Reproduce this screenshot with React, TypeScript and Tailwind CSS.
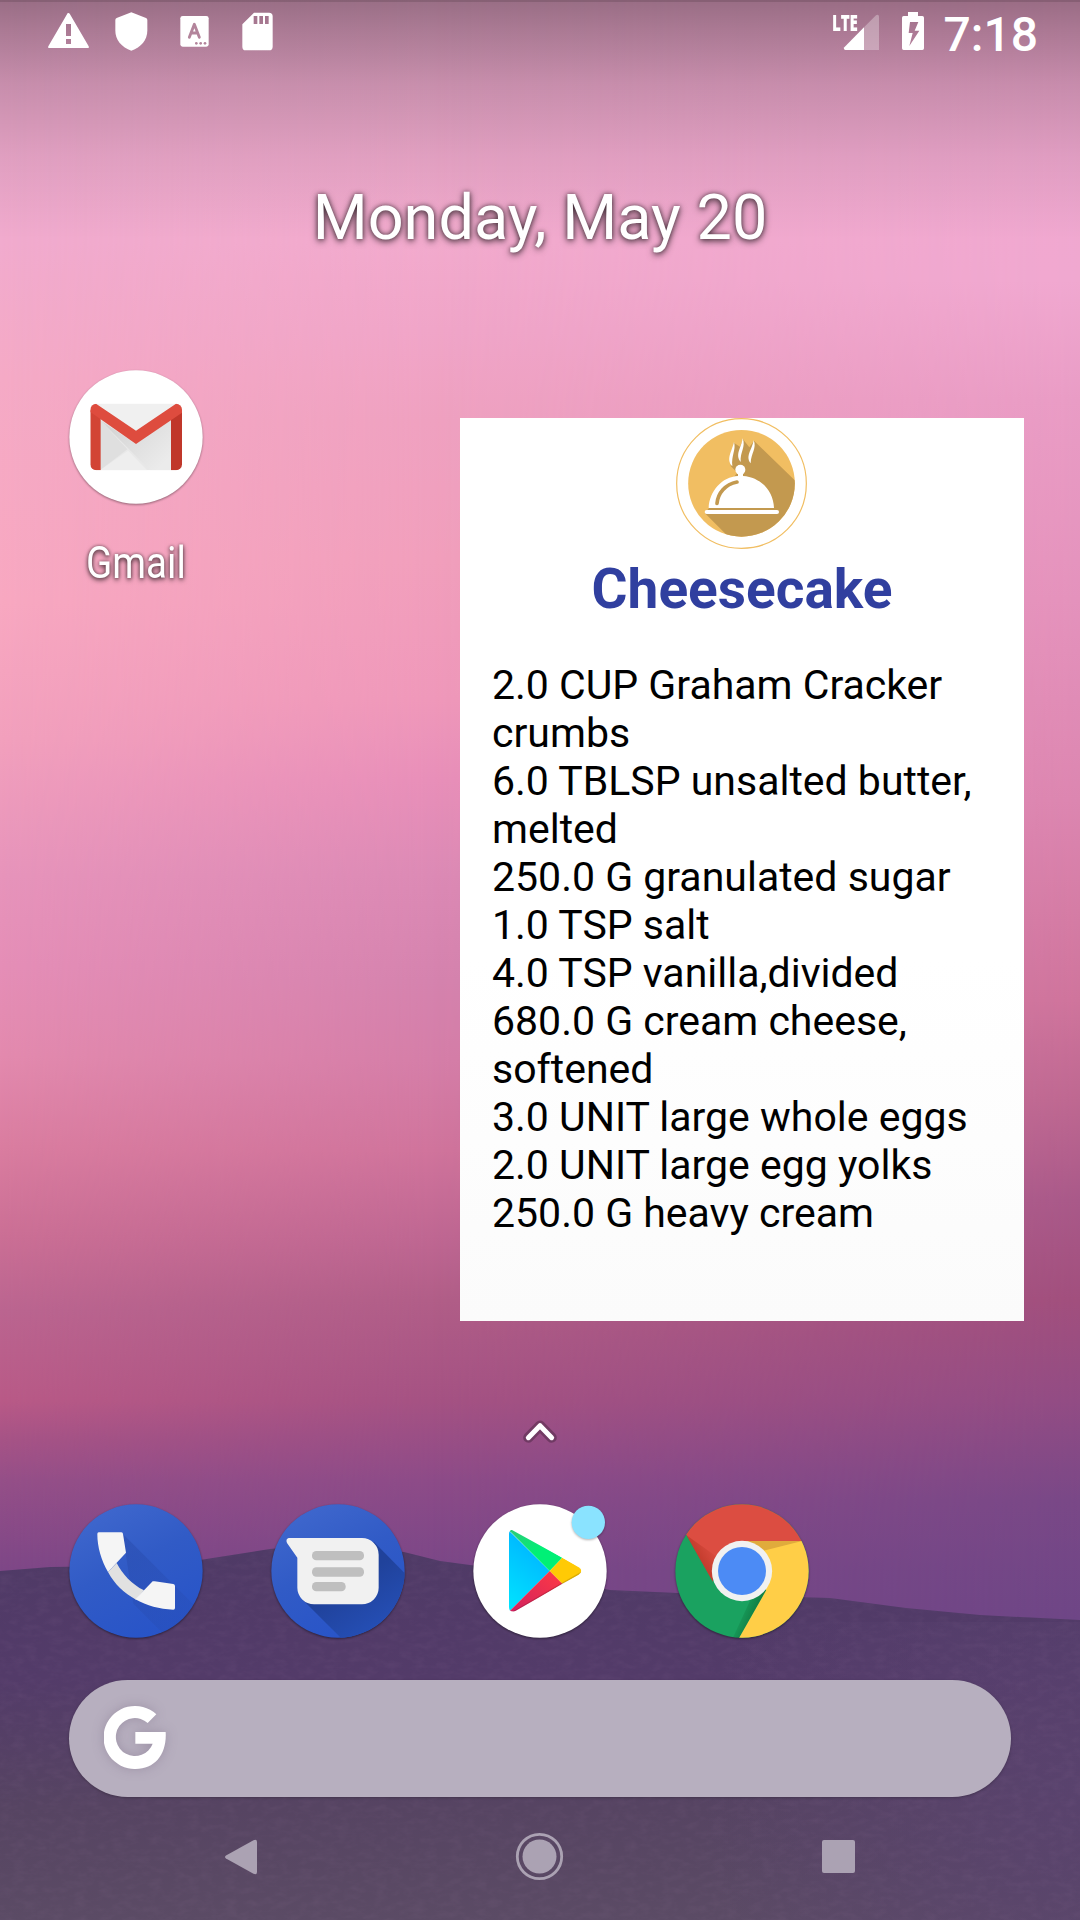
import React from "react";

const ingredients = [
  "2.0 CUP Graham Cracker",
  "crumbs",
  "6.0 TBLSP unsalted butter,",
  "melted",
  "250.0 G granulated sugar",
  "1.0 TSP salt",
  "4.0 TSP vanilla,divided",
  "680.0 G cream cheese,",
  "softened",
  "3.0 UNIT large whole eggs",
  "2.0 UNIT large egg yolks",
  "250.0 G heavy cream",
];

type Stop = [number, string];

const leftSky: Stop[] = [
  [0, "#efabd0"], [241, "#f1abce"], [377, "#f5aac6"], [603, "#f8a8c1"], [739, "#f2a0bd"],
  [875, "#e794bb"], [966, "#e58eb7"], [1056, "#e38aae"], [1147, "#da7da0"], [1237, "#cb6f95"],
  [1310, "#bb6590"], [1400, "#b95a87"], [1440, "#a65386"], [1480, "#954f88"], [1570, "#7e4787"],
];
const midSky: Stop[] = [
  [0, "#efacd0"], [241, "#f2aacd"], [330, "#f0a5c8"], [420, "#efa1c0"], [560, "#f19fbc"],
  [700, "#ef98ba"], [780, "#e88fb9"], [875, "#dc8ab5"], [980, "#d583ae"], [1060, "#d57ea8"],
  [1150, "#d0749c"], [1237, "#bf6792"], [1300, "#b15e88"], [1400, "#a55283"], [1480, "#8d4b88"],
  [1570, "#7a4787"],
];
const rightSky: Stop[] = [
  [0, "#efa8ce"], [280, "#f0a8d0"], [400, "#e99cc5"], [600, "#e492bc"], [800, "#dc86b0"],
  [1000, "#cf749c"], [1100, "#be6891"], [1200, "#a95989"], [1300, "#a14f7d"], [1400, "#924c84"],
  [1500, "#794887"], [1620, "#6e4686"],
];

const ridge =
  "M0 1571 L50 1567 L120 1566 L200 1560 L270 1549 L310 1545 L360 1547 L404 1552 L440 1561 L500 1569 L610 1590 L700 1594 L830 1598 L906 1608 L980 1615 L1080 1620 V1920 H0Z";

function Stops({ items }: { items: Stop[] }) {
  return (
    <>
      {items.map(([y, c]) => (
        <stop key={y} offset={y / 1920} stopColor={c} />
      ))}
    </>
  );
}

function Wallpaper() {
  return (
    <svg className="absolute inset-0" width="1080" height="1920" viewBox="0 0 1080 1920">
      <defs>
        <linearGradient id="skyL" x1="0" y1="0" x2="0" y2="1"><Stops items={leftSky} /></linearGradient>
        <linearGradient id="skyM" x1="0" y1="0" x2="0" y2="1"><Stops items={midSky} /></linearGradient>
        <linearGradient id="skyR" x1="0" y1="0" x2="0" y2="1"><Stops items={rightSky} /></linearGradient>
        <linearGradient id="fadeLeft" x1="0" y1="0" x2="1" y2="0">
          <stop offset="0" stopColor="#000" />
          <stop offset="0.4" stopColor="#fff" />
        </linearGradient>
        <linearGradient id="fadeRight" x1="0" y1="0" x2="1" y2="0">
          <stop offset="0.4" stopColor="#000" />
          <stop offset="1" stopColor="#fff" />
        </linearGradient>
        <mask id="maskM"><rect width="1080" height="1920" fill="url(#fadeLeft)" /></mask>
        <mask id="maskR"><rect width="1080" height="1920" fill="url(#fadeRight)" /></mask>
        <linearGradient id="hill" x1="0" y1="1545" x2="0" y2="1920" gradientUnits="userSpaceOnUse">
          <stop offset="0" stopColor="#4f3a66" />
          <stop offset="0.35" stopColor="#533b69" />
          <stop offset="0.7" stopColor="#564462" />
          <stop offset="1" stopColor="#5b4b65" />
        </linearGradient>
        <radialGradient id="hillGlow" cx="1080" cy="1790" r="380" gradientUnits="userSpaceOnUse">
          <stop offset="0" stopColor="#5a4270" stopOpacity="0.8" />
          <stop offset="1" stopColor="#5a4270" stopOpacity="0" />
        </radialGradient>
        <linearGradient id="scrim" x1="0" y1="0" x2="0" y2="1">
          <stop offset="0" stopColor="#000" stopOpacity="0.36" />
          <stop offset="0.12" stopColor="#000" stopOpacity="0.29" />
          <stop offset="0.35" stopColor="#000" stopOpacity="0.17" />
          <stop offset="0.65" stopColor="#000" stopOpacity="0.07" />
          <stop offset="1" stopColor="#000" stopOpacity="0" />
        </linearGradient>
        <filter id="grain" x="0" y="0" width="1" height="1">
          <feTurbulence type="fractalNoise" baseFrequency="0.08 0.16" numOctaves="3" seed="4" />
          <feColorMatrix values="0 0 0 0 0.5  0 0 0 0 0.3  0 0 0 0 0.5  0.9 0 0 0 -0.36" />
          <feComposite operator="in" in2="SourceGraphic" />
        </filter>
      </defs>
      <rect width="1080" height="1920" fill="url(#skyL)" />
      <g transform="translate(0 0)">
        <g mask="url(#maskM)"><rect width="1080" height="1920" fill="url(#skyM)" /></g>
        <g mask="url(#maskR)"><rect width="1080" height="1920" fill="url(#skyR)" /></g>
      </g>
      <path d={ridge} fill="url(#hill)" />
      <rect y="1622" width="1080" height="298" fill="url(#hillGlow)" />
      <path d={ridge} fill="#fff" filter="url(#grain)" opacity="0.14" />
      <rect width="1080" height="240" fill="url(#scrim)" />
      <rect width="1080" height="2" fill="#000" opacity="0.12" />
    </svg>
  );
}

function StatusBar() {
  return (
    <header className="relative flex h-[66px] items-start text-white">
      <svg className="ml-12 mt-[13px]" width="41" height="36" viewBox="144 39 123 108">
        <path fillRule="evenodd" fill="#fff" d="M205 39q3 0 5 4l56 96q2 5-3 5H148q-5 0-3-5l56-96q1-4 4-4zM198 72v36h15V72zM198 117v15h15v-15z" />
      </svg>
      <svg className="ml-[26px] mt-[12px]" width="33" height="39" viewBox="345 36 99 117">
        <path fill="#fff" d="M394 37l44 17q4 2 4 6v32c0 27-19 50-48 60-29-10-48-33-48-60V60q0-4 4-6z" />
      </svg>
      <svg className="ml-8 mt-4" width="29" height="31" viewBox="540 48 87 93">
        <rect x="541" y="48" width="85" height="92" rx="7" fill="#fff" />
        <path d="M568 112 L583 73 L598 112 M574 99 H592" fill="none" stroke="#b3849b" strokeWidth="8.5" strokeLinecap="round" strokeLinejoin="round" />
        <circle cx="589" cy="130" r="4" fill="#b3849b" /><circle cx="602" cy="130" r="4" fill="#b3849b" /><circle cx="615" cy="130" r="4" fill="#b3849b" />
      </svg>
      <svg className="ml-[33px] mt-3" width="31" height="39" viewBox="726 36 93 117">
        <path fillRule="evenodd" fill="#fff" d="M762 38h45q11 0 11 11v91q0 11-11 11h-70q-10 0-10-11V73zM761 48v24h11V48zM778 48v24h11V48zM795 48v24h11V48z" />
      </svg>
      <div className="relative ml-auto mt-3 h-10 w-[48px]">
        <svg className="absolute left-0 top-0" width="48" height="39" viewBox="159 36 144 117">
          <path fill="#fff" d="M252 82v68h-56q-7-2-3-8z" />
          <path fill="#fff" opacity="0.3" d="M252 82l36-36q7-4 9 3v101h-45z" />
        </svg>
        <span className="absolute -left-px top-[1px] origin-left scale-x-[0.66] font-['Open_Sans'] text-[23px] font-extrabold leading-[18px] tracking-[-0.3px]">LTE</span>
      </div>
      <svg className="ml-[21px] mt-3" width="22" height="39" viewBox="366 36 66 117">
        <path fillRule="evenodd" fill="#fff" d="M384 36h30v12h13q5 0 5 5v92q0 5-5 5h-56q-5 0-5-5V53q0-5 5-5h13zM390 66l-4 33h12l-10 39 30-46h-14l11-26z" />
      </svg>
      <span className="ml-5 mr-[42px] mt-[7px] text-[48px] font-medium leading-[56px]">7:18</span>
    </header>
  );
}

function RecipeLogo() {
  return (
    <svg className="-ml-[2px]" width="131" height="131" viewBox="48 24 393 393">
      <defs><clipPath id="disc"><circle cx="244.500" cy="220" r="160" /></clipPath></defs>
      <circle cx="244.500" cy="220.500" r="194.500" fill="#fff" stroke="#f1be62" strokeWidth="3.6" />
      <g clipPath="url(#disc)">
        <rect x="80" y="56" width="330" height="330" fill="#f1be62" />
        <path fill="#c3994f" d="M135 310 L220 395 H420 V226 L282 92 L268 112 L249 88 L240 110 L221 98 L212 168 L232 188 L147 294z" />
      </g>
      <g fill="#fff">
        <path d="M222 96c7 24-9 40-5 73-20-21-2-43 5-73zM248 85c10 26-8 40-6 71-18-22 2-42 6-71zM281 91c10 24-8 38-9 69-17-21 4-40 9-69z" />
        <circle cx="241" cy="179" r="15" />
        <path d="M234 190h15v8c55 4 91 46 93 96H146c2-50 40-94 88-96z" />
        <rect x="134" y="300" width="223" height="12" rx="6" />
      </g>
      <path d="M171 280c3-30 24-57 60-64" fill="none" stroke="#c3994f" strokeWidth="11" strokeLinecap="round" />
    </svg>
  );
}

function GmailIcon() {
  return (
    <svg width="150" height="150" viewBox="33 36 450 450">
      <defs>
        <clipPath id="mailBody"><rect x="121" y="161" width="275" height="200" rx="18" /></clipPath>
        <linearGradient id="mailShade" x1="200" y1="220" x2="330" y2="350" gradientUnits="userSpaceOnUse">
          <stop offset="0" stopColor="#cfcfcf" /><stop offset="1" stopColor="#ececec" />
        </linearGradient>
      </defs>
      <circle cx="258" cy="261" r="200" fill="#fff" className="drop-shadow-[0_3px_3px_rgba(0,0,0,0.4)]" />
      <g clipPath="url(#mailBody)">
        <rect x="121" y="161" width="275" height="200" fill="#e8e8e8" />
        <path d="M136 161H381L258 246z" fill="#f0f0f0" />
        <path d="M150 210 L300 361 H364 V205 L258 282z" fill="url(#mailShade)" opacity=".75" />
        <path d="M150 210 L232 298 L150 361z" fill="#dfdfdf" />
        <path d="M150 361 L234 302 L292 361z" fill="#eeeeee" />
        <path d="M121 180 L152 200 V361 H121z" fill="#d24435" />
        <path d="M396 180 L363 205 V361 H396z" fill="#c0372a" />
        <path d="M121 186 V150 L138 161 L258 242 L378 161 L396 150 V188 L258 282z" fill="#de4c3e" />
      </g>
    </svg>
  );
}

function PhoneIcon() {
  return (
    <svg width="150" height="150" viewBox="33 47 450 450">
      <defs>
        <linearGradient id="blueDisc" x1="0.1" y1="0" x2="0.6" y2="1">
          <stop offset="0" stopColor="#4169ce" /><stop offset="0.5" stopColor="#315bc6" /><stop offset="1" stopColor="#2854c8" />
        </linearGradient>
        <linearGradient id="phoneShadow" x1="200" y1="200" x2="400" y2="420" gradientUnits="userSpaceOnUse">
          <stop offset="0" stopColor="#2748a8" stopOpacity="0.45" /><stop offset="1" stopColor="#2748a8" stopOpacity="0.2" />
        </linearGradient>
        <clipPath id="phoneDisc"><circle cx="258" cy="272" r="200" /></clipPath>
      </defs>
      <circle cx="258" cy="272" r="200" fill="url(#blueDisc)" className="drop-shadow-[0_3px_3px_rgba(0,0,0,0.45)]" />
      <path clipPath="url(#phoneDisc)" d="M218 160 L480 422 V600 L250 370z" fill="url(#phoneShadow)" />
      <path d="M200 248 C218 282 245 312 282 330 L258 358 C222 338 194 312 174 275z" fill="#e1e1e1" />
      <path d="M146 156h68q5 0 5 5l9 56-54 58c-20-35-32-75-32-114q0-5 4-5z" fill="#f5f5f5" />
      <path d="M308 303q3-1 6 0l56 8q5 1 5 6v66q0 5-5 5c-42-1-79-12-114-31z" fill="#f5f5f5" />
    </svg>
  );
}

function MessagesIcon() {
  return (
    <svg width="150" height="150" viewBox="639 47 450 450">
      <defs>
        <clipPath id="msgDisc"><circle cx="864" cy="272" r="200" /></clipPath>
        <linearGradient id="msgShadow" x1="850" y1="340" x2="940" y2="480" gradientUnits="userSpaceOnUse">
          <stop offset="0" stopColor="#20429b" /><stop offset="1" stopColor="#254fb6" />
        </linearGradient>
      </defs>
      <circle cx="864" cy="272" r="200" fill="url(#blueDisc)" className="drop-shadow-[0_3px_3px_rgba(0,0,0,0.45)]" />
      <path clipPath="url(#msgDisc)" d="M755 355 L900 500 H1100 V315 L972 185z" fill="url(#msgShadow)" />
      <path d="M716 173H936a50 50 0 0 1 50 50v99a50 50 0 0 1-50 50H792a50 50 0 0 1-50-50v-90l-31-44q-5-12 5-15z" fill="#f1f1f1" />
      <g fill="#bfbfbf">
        <rect x="786" y="212" width="156" height="28" rx="13" />
        <rect x="786" y="261" width="156" height="28" rx="13" />
        <rect x="786" y="305" width="101" height="28" rx="13" />
      </g>
    </svg>
  );
}

function PlayIcon() {
  return (
    <svg width="150" height="150" viewBox="45 288 450 450">
      <defs>
        <linearGradient id="playBlue" x1="0.6" y1="0" x2="0.2" y2="1">
          <stop offset="0" stopColor="#00b0ff" /><stop offset="1" stopColor="#00e2ff" />
        </linearGradient>
        <linearGradient id="playRed" x1="1" y1="0" x2="0" y2="1">
          <stop offset="0" stopColor="#ff3a44" /><stop offset="1" stopColor="#d02060" />
        </linearGradient>
        <linearGradient id="playGreen" x1="0" y1="0" x2="0.5" y2="0.6">
          <stop offset="0" stopColor="#2fc878" /><stop offset="1" stopColor="#00f076" />
        </linearGradient>
        <clipPath id="playShape">
          <path d="M177 403q0-18 19-12L386 502q16 11 0 22L196 633q-19 6-19-12z" />
        </clipPath>
      </defs>
      <circle cx="270" cy="513" r="200" fill="#fff" className="drop-shadow-[0_3px_3px_rgba(0,0,0,0.45)]" />
      <g clipPath="url(#playShape)">
        <path d="M177 392 L299 513 L177 635z" fill="url(#playBlue)" />
        <path d="M177 385 L337 473 L299 513 L180 394z" fill="url(#playGreen)" />
        <path d="M337 473 L299 513 L337 551 L410 513z" fill="#ffca05" />
        <path d="M299 513 L337 551 L190 640 L180 632z" fill="url(#playRed)" />
        <path d="M190 636 L337 551 L398 516" fill="none" stroke="#000" strokeOpacity="0.15" strokeWidth="6" />
      </g>
      <circle cx="415" cy="367" r="50" fill="#8ae3ff" className="drop-shadow-[0_3px_3px_rgba(0,0,0,0.3)]" />
    </svg>
  );
}

function ChromeIcon() {
  return (
    <svg width="150" height="150" viewBox="650.500 288 450 450">
      <defs>
        <clipPath id="chromeDisc"><circle cx="875.500" cy="513" r="200" /></clipPath>
        <linearGradient id="redShade" x1="780" y1="420" x2="730" y2="450" gradientUnits="userSpaceOnUse">
          <stop offset="0" stopColor="#a52714" stopOpacity="0" /><stop offset="1" stopColor="#a52714" stopOpacity="0.45" />
        </linearGradient>
        <linearGradient id="greenShade" x1="870" y1="620" x2="920" y2="640" gradientUnits="userSpaceOnUse">
          <stop offset="0" stopColor="#055524" stopOpacity="0" /><stop offset="1" stopColor="#055524" stopOpacity="0.5" />
        </linearGradient>
      </defs>
      <circle cx="875.500" cy="513" r="200" fill="#1aa260" className="drop-shadow-[0_3px_3px_rgba(0,0,0,0.45)]" />
      <g clipPath="url(#chromeDisc)">
        <path d="M852 740 L950 567 L905 590 L845 720z" fill="url(#greenShade)" />
        <path d="M875 423 H1100 V740 H852 L948 571z" fill="#ffce47" />
        <path d="M878 423 H1056 L940 452z" fill="#e0ab3c" />
        <path d="M875 423 H1060 V300 H680 V354 L788 545 V513z" fill="#dc4d41" />
        <path d="M708 405 L788 545 L800 470z" fill="url(#redShade)" />
      </g>
      <circle cx="875.500" cy="513" r="90.500" fill="#f1f1f1" />
      <circle cx="875.500" cy="513" r="72" fill="#4c8bf5" />
    </svg>
  );
}

export default function App() {
  return (
    <main className="relative h-[1920px] w-[1080px] overflow-hidden font-['Roboto',sans-serif]">
      <Wallpaper />
      <div className="relative flex h-full flex-col">
        <StatusBar />

        <h1 className="mt-[115px] text-center text-[63px] leading-[74px] text-white [text-shadow:0_2px_7px_rgba(0,0,0,0.7),0_0_4px_rgba(0,0,0,0.4)]">
          Monday, May 20
        </h1>

        <section className="mt-[106.500px] flex h-[960px] items-start">
          <div className="ml-[61px] flex w-[150px] flex-col items-center">
            <GmailIcon />
            <span className="mt-[25px] scale-x-[0.875] text-[44px] leading-[52px] text-white [text-shadow:0_2px_6px_rgba(0,0,0,0.7),0_0_4px_rgba(0,0,0,0.4)]">Gmail</span>
          </div>
          <article className="ml-[249px] mt-[56.500px] flex h-[903px] w-[564px] flex-col items-center bg-linear-to-b from-white from-60% to-[#fbfbfb]">
            <RecipeLogo />
            <h2 className="mt-[7px] text-[55px] font-bold leading-[66px] text-[#303f9f]">Cheesecake</h2>
            <ul className="mt-[39px] w-full pl-8 text-[41px] leading-[48px] text-black">
              {ingredients.map((line) => (
                <li key={line} className="whitespace-nowrap">{line}</li>
              ))}
            </ul>
          </article>
        </section>

        <div className="mt-[97px] flex justify-center">
          <svg width="36" height="26" viewBox="216 56 108 78" fill="none" strokeLinecap="round" strokeLinejoin="round">
            <path d="M235 112l35-36 35 36" stroke="#000" strokeOpacity="0.25" strokeWidth="31" />
            <path d="M235 112l35-36 35 36" stroke="#fff" strokeWidth="15" />
          </svg>
        </div>

        <nav className="ml-[61px] mt-[51px] flex gap-[52px]">
          <PhoneIcon />
          <MessagesIcon />
          <PlayIcon />
          <ChromeIcon />
        </nav>

        <div className="mx-[69px] mt-[34px] flex h-[117px] shrink-0 items-center rounded-full bg-[#b7afbf] pl-[35px] shadow-[0_1px_3px_rgba(0,0,0,0.25)]">
          <svg className="mb-[2px] drop-shadow-[0_0_6px_rgba(80,60,90,0.25)]" width="62" height="63" viewBox="162 138 186 189">
            <path fill="#fff" d="M319 163 L293 189 A57 57 0 1 0 308 251 H256 V216 H347 C351 282 316 327 257 327 A94.500 94.500 0 1 1 319 163z" />
          </svg>
        </div>

        <footer className="flex h-[120px] shrink-0 items-center text-[#aba2b3]">
          <svg className="ml-[225px]" width="32" height="36" viewBox="0 0 32 36">
            <path fill="currentColor" d="M1 16.500L28.500 1.200q3.500-1.500 3.500 1.800v30q0 3.300-3.500 1.800L1 19.500q-2-1.500 0-3z" />
          </svg>
          <svg className="ml-[258px]" width="49" height="49" viewBox="0 0 49 49">
            <circle cx="24.500" cy="24.500" r="22.200" fill="none" stroke="currentColor" strokeWidth="2.800" />
            <circle cx="24.500" cy="24.500" r="17" fill="currentColor" />
          </svg>
          <span className="ml-[257.500px] h-[33px] w-[33px] rounded-[2px] bg-[#aba2b3]" />
        </footer>
      </div>
    </main>
  );
}
